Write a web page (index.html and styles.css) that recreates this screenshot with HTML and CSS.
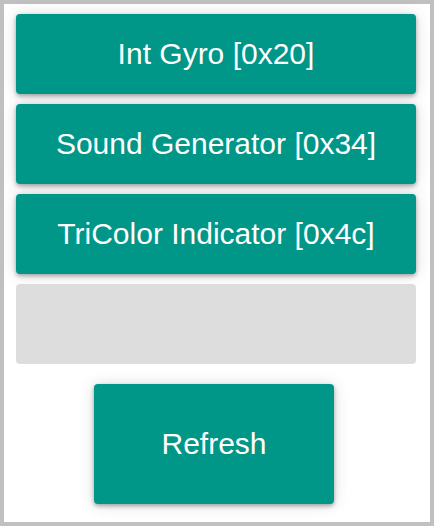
FILE: index.html
```html
<!DOCTYPE html>
<html lang="en">
<head>
<meta charset="utf-8">
<meta name="viewport" content="width=device-width, initial-scale=1">
<title>Devices</title>
<link rel="stylesheet" href="styles.css">
</head>
<body>
<main class="panel">
  <button class="button" type="button">Int Gyro [0x20]</button>
  <button class="button" type="button">Sound Generator [0x34]</button>
  <button class="button" type="button">TriColor Indicator [0x4c]</button>
  <button class="button" type="button" aria-label="Empty slot" disabled></button>
  <div class="actions">
    <button class="button button-refresh" type="button">Refresh</button>
  </div>
</main>
</body>
</html>
```

FILE: styles.css
```css
* {
  box-sizing: border-box;
}

body {
  margin: 0;
  background: #fff;
  font-family: "Liberation Sans", Arial, sans-serif;
}

.panel {
  display: flex;
  flex-direction: column;
  gap: 10px;
  min-height: 100vh;
  padding: 10px 14px 18px 12px;
  border: 4px solid #c0c0c0;
}

.button {
  height: 80px;
  padding: 0 16px;
  border: 0;
  border-radius: 4px;
  background: #009688;
  color: #fff;
  font: inherit;
  font-size: 30px;
  box-shadow: 0 2px 4px rgba(0, 0, 0, 0.32), 0 1px 16px rgba(0, 0, 0, 0.14);
}

.button:disabled {
  background: #ddd;
  box-shadow: none;
}

.actions {
  display: flex;
  justify-content: center;
  margin-top: 10px;
  padding-right: 4px;
}

.button-refresh {
  min-width: 240px;
  height: 120px;
}
```
